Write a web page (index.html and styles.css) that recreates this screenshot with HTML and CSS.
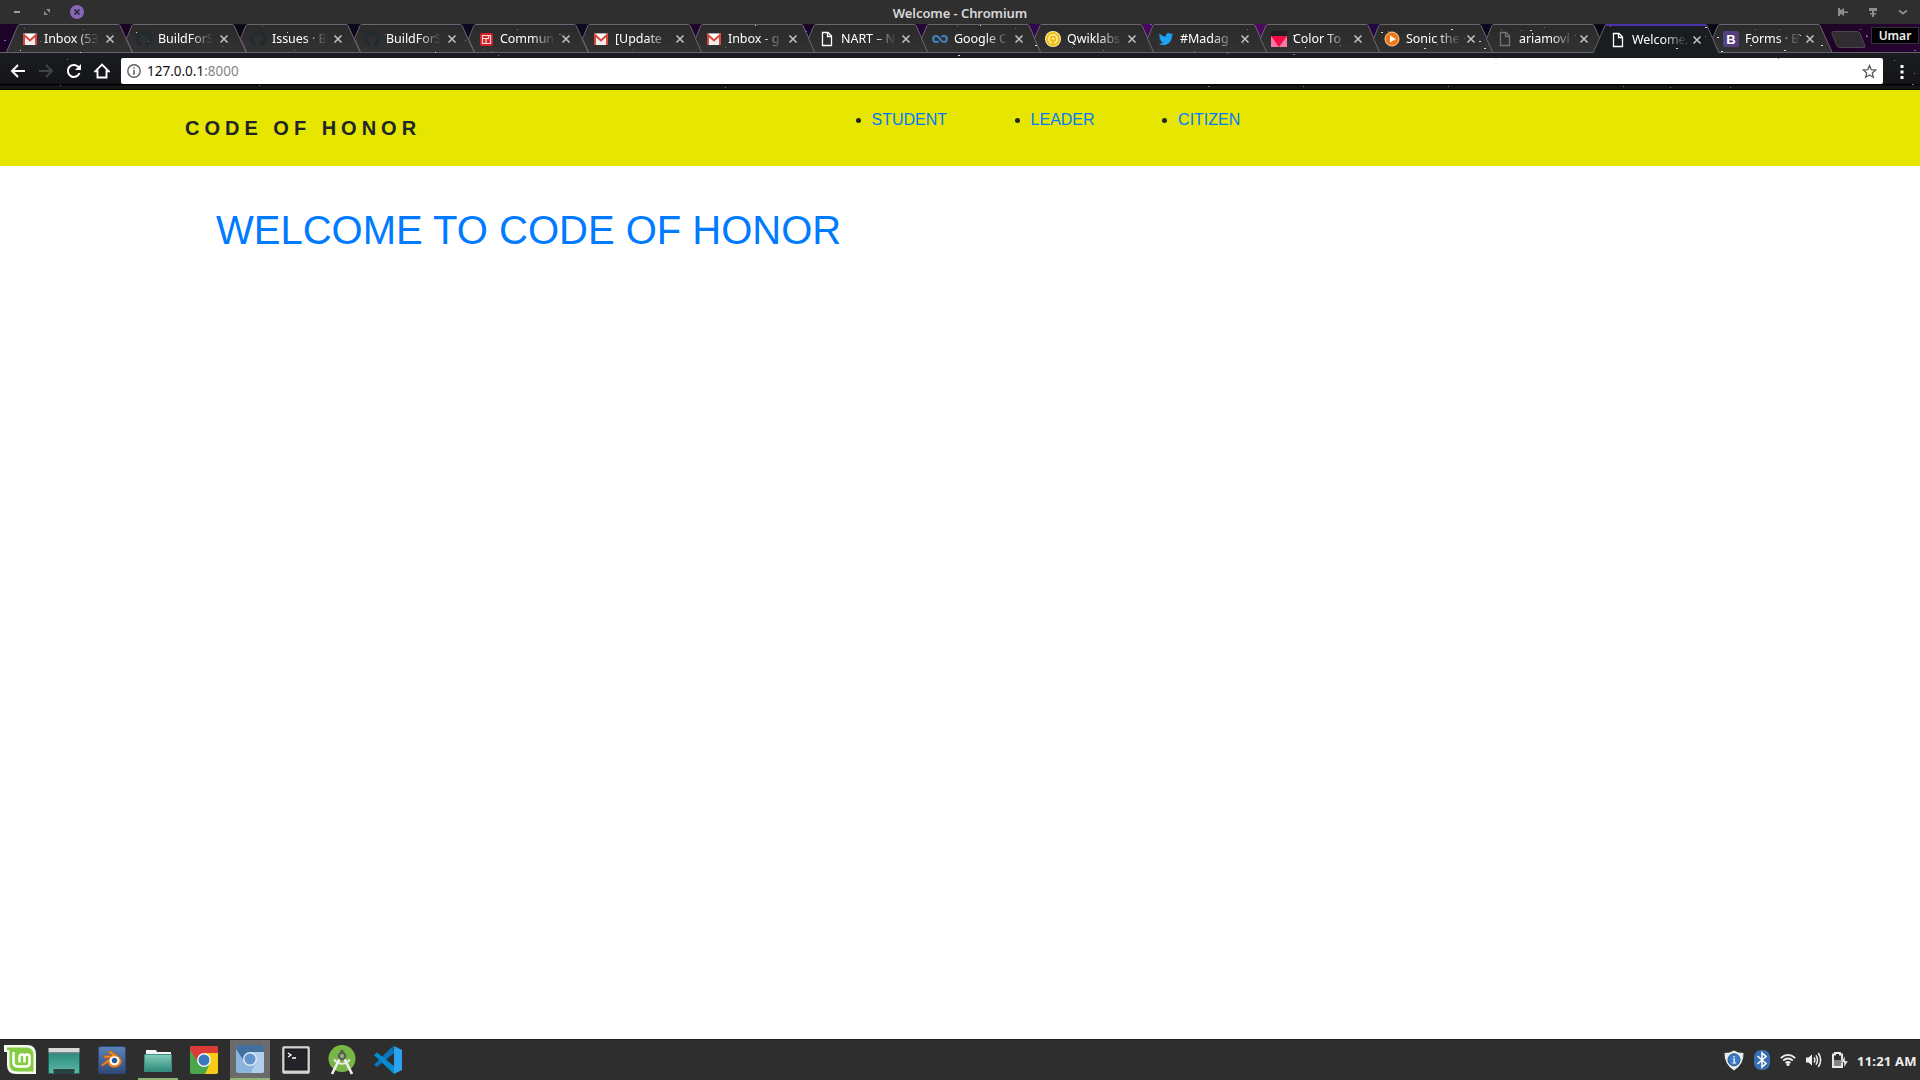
FILE: index.html
```html
<!DOCTYPE html>
<html lang="en">
<head>
<meta charset="utf-8">
<title>Welcome</title>
<link rel="stylesheet" href="styles.css">
</head>
<body>
<svg class="defs" aria-hidden="true">
  <defs>
    <linearGradient id="tabFill" x1="0" y1="0" x2="0" y2="1"><stop offset="0" stop-color="#2a2a2b"/><stop offset="1" stop-color="#323232"/></linearGradient>
    <linearGradient id="teal" x1="0" y1="0" x2="0" y2="1"><stop offset="0" stop-color="#2b8a7d"/><stop offset="1" stop-color="#5bb8a6"/></linearGradient>
    <linearGradient id="folderFill" x1="0" y1="0" x2="0" y2="1"><stop offset="0" stop-color="#86cdbb"/><stop offset="1" stop-color="#2c8a7b"/></linearGradient>
    <linearGradient id="blueFill" x1="0" y1="0" x2="0" y2="1"><stop offset="0" stop-color="#5d84b9"/><stop offset="1" stop-color="#2d4a78"/></linearGradient>
    <clipPath id="tile"><rect width="28" height="28" rx="2"/></clipPath>
    <symbol id="tabFirst" viewBox="0 0 127 29"><path d="M0.5 28L12 1.500Q12.500 .5 14 .5H112Q113.500 .5 114 1.500L126 28" fill="url(#tabFill)" stroke="#6c656f"/></symbol>
    <symbol id="tab" viewBox="0 0 127 29"><path d="M12.500 28L6.500 14.700 12 1.500Q12.500 .5 14 .5H112Q113.500 .5 114 1.500L126 28" fill="url(#tabFill)" stroke="#6c656f"/></symbol>
    <symbol id="tabActive" viewBox="0 0 127 29"><path d="M0 29L12 1.500Q12.500 1 14 1H112Q113.500 1 114 1.500L126 29" fill="#191d22" stroke="#66626b"/><path d="M13 1H113" stroke="#4c35a8" stroke-width="2"/></symbol>
    <symbol id="close" viewBox="0 0 10 10"><path d="M1.500 1.500L8.500 8.500M8.500 1.500L1.500 8.500" stroke="#c4c4c4" stroke-width="1.500"/></symbol>
    <symbol id="gmail" viewBox="0 0 16 16"><path d="M1 2.500H15V14H1Z" fill="#efefef"/><path d="M2 14V4L8 9.500 14 4V14" fill="none" stroke="#d9463c" stroke-width="2"/><path d="M3 2.800L8 7.200 13 2.800Z" fill="#fff"/></symbol>
    <symbol id="github" viewBox="0 0 16 16"><path fill="#202a31" d="M8 0C3.580 0 0 3.580 0 8c0 3.540 2.290 6.530 5.470 7.590.4.070.550-.170.550-.380v-1.490c-2.010.370-2.530-.490-2.690-.940-.090-.230-.480-.940-.820-1.130-.280-.150-.680-.520-.010-.530.630-.010 1.080.580 1.230.820.720 1.210 1.870.870 2.330.660.070-.520.280-.870.510-1.070-1.780-.2-3.640-.890-3.640-3.950 0-.870.310-1.590.820-2.150-.080-.2-.360-1.020.080-2.120 0 0 .670-.210 2.200.820a7.600 7.600 0 014 0c1.530-1.040 2.200-.820 2.200-.820.440 1.100.160 1.920.080 2.120.510.560.820 1.270.820 2.150 0 3.070-1.870 3.750-3.650 3.950.290.250.540.730.540 1.480v2.200c0 .210.150.460.550.380A8 8 0 0016 8c0-4.420-3.580-8-8-8z"/></symbol>
    <symbol id="page" viewBox="0 0 16 16"><path d="M3.500 1.500H9L12.500 5V14.500H3.500ZM8.500 1.500V5.500H12.500" fill="none" stroke="currentColor" stroke-width="1.300"/></symbol>
  </defs>
</svg>

<header class="titlebar">
  <div class="window-buttons">
    <svg width="14" height="14"><path d="M4 7H10" stroke="#a0a0a0" stroke-width="2"/></svg>
    <svg width="14" height="14"><path d="M6 4H10V8ZM4 6V10H8Z" fill="#8d8d8d"/></svg>
    <svg width="14" height="14"><circle cx="7" cy="7" r="7" fill="#8667b6"/><path d="M4.500 4.500L9.500 9.500M9.500 4.500L4.500 9.500" stroke="#2b2536" stroke-width="1.700"/></svg>
  </div>
  <span class="window-title">Welcome - Chromium</span>
  <div class="window-tools">
    <svg width="12" height="12"><path d="M1 2H3V3.500L4 4 7 2V5.500H11V7H7V10L4 8 3 8.500V10H1Z" fill="#8d8d8d"/></svg>
    <svg width="12" height="12"><path d="M2 2H10V5H2ZM5 5H7V7H9V8.500H7V11H5V8.500H3V7H5Z" fill="#8d8d8d"/></svg>
    <svg width="12" height="12"><path d="M2 4.500L6 7.500 10 4.500" fill="none" stroke="#8d8d8d" stroke-width="2"/></svg>
  </div>
</header>

<div class="chrome">
  <nav class="tabs">
    <div class="tab wide"><svg class="shape"><use href="#tabFirst"/></svg><svg class="fav"><use href="#gmail"/></svg><span class="label">Inbox (53</span><svg class="x"><use href="#close"/></svg></div>
    <div class="tab wide"><svg class="shape"><use href="#tab"/></svg><svg class="fav"><use href="#github"/></svg><span class="label">BuildForS</span><svg class="x"><use href="#close"/></svg></div>
    <div class="tab wide"><svg class="shape"><use href="#tab"/></svg><svg class="fav"><use href="#github"/></svg><span class="label">Issues · B</span><svg class="x"><use href="#close"/></svg></div>
    <div class="tab wide"><svg class="shape"><use href="#tab"/></svg><svg class="fav"><use href="#github"/></svg><span class="label">BuildForS</span><svg class="x"><use href="#close"/></svg></div>
    <div class="tab wide"><svg class="shape"><use href="#tab"/></svg><svg class="fav" viewBox="0 0 16 16"><rect x="2" y="2" width="13" height="13" rx="2" fill="#d32228"/><path d="M4.500 4.500H12.500V12.500H4.500Z" fill="none" stroke="#f5d5d5" stroke-width="1.200"/><path d="M5 7.500H10M8 8V12M10.500 5V8" stroke="#f5d5d5" stroke-width="1.200"/></svg><span class="label">Commun</span><svg class="x"><use href="#close"/></svg></div>
    <div class="tab"><svg class="shape"><use href="#tab"/></svg><svg class="fav"><use href="#gmail"/></svg><span class="label">[Update</span><svg class="x"><use href="#close"/></svg></div>
    <div class="tab"><svg class="shape"><use href="#tab"/></svg><svg class="fav"><use href="#gmail"/></svg><span class="label">Inbox - g</span><svg class="x"><use href="#close"/></svg></div>
    <div class="tab"><svg class="shape"><use href="#tab"/></svg><svg class="fav light"><use href="#page"/></svg><span class="label">NART – N</span><svg class="x"><use href="#close"/></svg></div>
    <div class="tab"><svg class="shape"><use href="#tab"/></svg><svg class="fav" viewBox="0 0 16 16"><path d="M6.500 10Q6 11 4.200 11A3 3 0 014.200 5Q6 5 8 8T11.800 11A3 3 0 0011.800 5Q10 5 9.500 6" fill="none" stroke="#3f82bd" stroke-width="2.200"/></svg><span class="label">Google C</span><svg class="x"><use href="#close"/></svg></div>
    <div class="tab"><svg class="shape"><use href="#tab"/></svg><svg class="fav" viewBox="0 0 16 16"><circle cx="8" cy="8" r="8" fill="#fff2b0"/><circle cx="8" cy="8" r="6" fill="none" stroke="#edbd13" stroke-width="2.200"/><circle cx="8" cy="8" r="2.500" fill="none" stroke="#edbd13" stroke-width="1.800"/><path d="M8 8V15" stroke="#edbd13" stroke-width="1.800"/></svg><span class="label">Qwiklabs</span><svg class="x"><use href="#close"/></svg></div>
    <div class="tab"><svg class="shape"><use href="#tab"/></svg><svg class="fav" viewBox="-1 -1 26 26"><path fill="#1da1f2" d="M23.950 4.570a10 10 0 01-2.820.770 4.960 4.960 0 002.160-2.720c-.950.550-2 .950-3.130 1.180a4.920 4.920 0 00-8.380 4.480C7.690 8.100 4.070 6.130 1.640 3.160a4.820 4.820 0 00-.670 2.480c0 1.710.870 3.210 2.190 4.100a4.900 4.900 0 01-2.230-.620v.060a4.920 4.920 0 003.950 4.830 5 5 0 01-2.210.080 4.940 4.940 0 004.600 3.420A9.870 9.870 0 010 19.540a14 14 0 007.550 2.210c9.050 0 14-7.500 14-13.980 0-.210 0-.420-.020-.630a9.900 9.900 0 002.420-2.570z"/></svg><span class="label">#Madag</span><svg class="x"><use href="#close"/></svg></div>
    <div class="tab"><svg class="shape"><use href="#tab"/></svg><svg class="fav" viewBox="0 0 16 16"><path d="M0 0H16V16H0Z" fill="#202020"/><path d="M0 5H16V16H0Z" fill="#ff78a5"/><path d="M0 5H16L8 16Z" fill="#f50b45"/></svg><span class="label">Color To</span><svg class="x"><use href="#close"/></svg></div>
    <div class="tab"><svg class="shape"><use href="#tab"/></svg><svg class="fav" viewBox="0 0 16 16"><circle cx="8" cy="8" r="7" fill="#f17816" stroke="#ffd0a0"/><path d="M6 4.500L12 8 6 11.500Z" fill="#fff"/></svg><span class="label">Sonic the</span><svg class="x"><use href="#close"/></svg></div>
    <div class="tab"><svg class="shape"><use href="#tab"/></svg><svg class="fav dim"><use href="#page"/></svg><span class="label">ariamovi</span><svg class="x"><use href="#close"/></svg></div>
    <div class="tab active"><svg class="shape"><use href="#tabActive"/></svg><svg class="fav light"><use href="#page"/></svg><span class="label">Welcome</span><svg class="x"><use href="#close"/></svg></div>
    <div class="tab"><svg class="shape"><use href="#tab"/></svg><svg class="fav" viewBox="0 0 16 16"><rect width="16" height="16" rx="2" fill="#563d7c"/><text x="3.300" y="12.700" class="bs">B</text></svg><span class="label">Forms · B</span><svg class="x"><use href="#close"/></svg></div>
    <svg class="new-tab" width="36" height="19"><path d="M3 .5H26Q28 .5 29 2L34 15Q34.500 16.500 33 16.500H9Q7 16.500 6 15L1 3Q0 .5 3 .5Z" fill="#2f2d31" stroke="#4b474d"/></svg>
    <span class="profile">Umar</span>
  </nav>
  <div class="toolbar">
    <svg class="nav-icon" viewBox="0 0 16 16"><path d="M15 8H2M8 2L2 8 8 14" fill="none" stroke="#fff" stroke-width="2"/></svg>
    <svg class="nav-icon" viewBox="0 0 16 16"><path d="M1 8H14M8 2L14 8 8 14" fill="none" stroke="#424345" stroke-width="2"/></svg>
    <svg class="nav-icon" viewBox="0 0 16 16"><path d="M13.500 10A6 6 0 1112 3.600L13.500 5.500" fill="none" stroke="#fff" stroke-width="2"/><path d="M15 1V7H9Z" fill="#fff"/></svg>
    <svg class="nav-icon" viewBox="0 0 16 16"><path d="M8 1.700L1.500 8.200H3.500V14.500H12.500V8.200H14.500Z" fill="none" stroke="#fff" stroke-width="1.900"/></svg>
    <div class="omnibox">
      <svg width="14" height="14"><circle cx="7" cy="7" r="6.200" fill="none" stroke="#5c5c5c" stroke-width="1.400"/><path d="M7 3.200V4.800M7 6V10.800" stroke="#5c5c5c" stroke-width="1.600"/></svg>
      <span class="url">127.0.0.1<span class="port">:8000</span></span>
      <svg class="star" width="15" height="15" viewBox="0 0 15 15"><path d="M7.500 1.500L9.200 5.600 13.700 6 10.300 8.900 11.300 13.200 7.500 10.900 3.700 13.200 4.700 8.900 1.300 6 5.800 5.600Z" fill="none" stroke="#5b5b5b" stroke-width="1.300"/></svg>
    </div>
    <svg class="menu" width="4" height="14"><path d="M.5 0H3.500V3H.5ZM.5 5.500H3.500V8.500H.5ZM.5 11H3.500V14H.5Z" fill="#fff"/></svg>
  </div>
  <svg class="stars" width="1920" height="66" viewBox="0 24 1920 66">
    <path stroke="#d8d8e0" d="M20 50.500h1M80 52.500h1M136 32.500h1M287 32.500h1M435 52.500h1M806 31.500h1M755 25.500h1M980 25.500h1M1035 45.500h2M1293 35.500h2M1305 47.500h1M1381 32.500h2M1424 48.500h2M1451 29.500h2M1479 41.500h2M1530 30.500h2M1484 48.500h2M1495 58.500h2M1676 48.500h2M1705 27.500h2M1717 37.500h2M1721 51.500h2M1750 45.500h2M1784 50.500h2M1800 35.500h1M1821 45.500h2M958 55.500h2"/>
    <path stroke="#777580" d="M24 28.500h1M40 41.500h1M67 59.500h1M83 29.500h1M148 41.500h1M222 46.500h1M262 26.500h1M294 50.500h1M385 34.500h1M465 40.500h1M484 49.500h1M491 51.500h1M498 55.500h1M517 29.500h1M559 34.500h2M633 49.500h1M725 47.500h1M957 26.500h1M1015 28.500h1M1072 47.500h1M1103 50.500h1M1194 51.500h1M1227 53.500h1M1247 29.500h1M1301 39.500h1M1340 45.500h1M1388 31.500h1M1437 44.500h1M1464 38.500h1M1501 29.500h1M1521 30.500h1M1544 27.500h1M1568 34.500h1M1575 35.500h1M1640 41.500h1M1686 43.500h1M1705 36.500h1M1724 42.500h1M1755 29.500h1M1780 29.500h1M1795 42.500h1M1860 29.500h1M1866 35.500h1M60 85.500h1M259 85.500h1M725 87.500h1M1208 86.500h2M1448 86.500h1M1623 86.500h1M1670 87.500h1M1730 87.500h1M1894 60.500h1"/>
    <path stroke="#9b6c78" d="M1293 54.500h2M1209 86.500h1M1303 86.500h1M1610 26.500h1M1798 34.500h2M1778 58.500h1M1914 73.500h1M1912 84.500h2M1243 43.500h1"/>
    <path stroke="#7563dd" d="M4 40.500h2M24 28.500h1M564 24.500h1M805 31.500h2M1150 24.500h2M1866 36.500h2M1914 50.500h2"/>
  </svg>
</div>

<main class="page">
  <header class="site-header">
    <div class="brand">CODE OF HONOR</div>
    <ul class="links">
      <li><a href="#">STUDENT</a></li>
      <li><a href="#">LEADER</a></li>
      <li><a href="#">CITIZEN</a></li>
    </ul>
  </header>
  <h1 class="welcome">WELCOME TO CODE OF HONOR</h1>
</main>

<footer class="panel">
  <div class="launchers">
    <div class="app mint"><svg width="32" height="30" viewBox="0 0 32 30"><path d="M0 0H23Q32 0 32 9V29H12Q3 29 3 20V7H0Z" fill="#f4f8ef"/><path d="M3 2.500H22Q29.500 2.500 29.500 10V26.500H13Q5.500 26.500 5.500 19V5H3Z" fill="#86cc42"/><path d="M9.500 7V17Q9.500 21.500 14 21.500H22Q25.500 21.500 25.500 18V12Q25.500 9.500 23 9.500T20.500 12V17.500M20.500 12Q20.500 9.500 18 9.500T15.500 12V17.500" fill="none" stroke="#fff" stroke-width="2.500"/></svg></div>
    <div class="app desktop"><svg width="32" height="26" viewBox="0 0 32 26"><path d="M.5 4H31.500V25.500H.5Z" fill="url(#teal)" stroke="#1f6259"/><path d="M.5 0H31.500V4.500H.5Z" fill="#d7d7d7"/><path d="M1 5H31" stroke="#777"/><path d="M5 26V20.500H27V26" fill="#24443f" stroke="#68aaa0"/></svg></div>
    <div class="app"><svg width="28" height="28"><rect x=".5" y=".5" width="27" height="27" rx="2" fill="url(#blueFill)" stroke="#2d4878"/><path d="M3 19L12 12H6V9.500H14L10 6 12 4.500 21 10.500Q25 14 23 18 20 22 15 21.500 10 20.500 10 16.500L5 20Z" fill="#ee8727" stroke="#b65a17" stroke-width=".7"/><ellipse cx="16.500" cy="14.800" rx="5" ry="4.500" fill="#fff"/><circle cx="16.500" cy="14.500" r="2.700" fill="#235c9e"/></svg></div>
    <div class="app open"><svg width="28" height="28"><path d="M2 10V5H12L13 7H27V12H2Z" fill="#f4f4f4"/><path d="M.5 9.500H27.500V26.500H.5Z" fill="url(#folderFill)" stroke="#3c8e7e"/></svg></div>
    <div class="app"><svg width="28" height="28"><g clip-path="url(#tile)"><path d="M0 0H28V28H0Z" fill="#49a74b"/><path d="M14 7H28V28H15L20 17Z" fill="#f8cb16"/><path d="M0 0H28V7H14L8 16 0 4Z" fill="#dc3a37"/><circle cx="14" cy="14" r="7" fill="#f2f4f3"/><circle cx="14" cy="14" r="5.500" fill="#3979bc"/></g></svg></div>
    <div class="app open current"><svg width="28" height="28"><g clip-path="url(#tile)"><path d="M0 0H28V28H0Z" fill="#8cb5dd"/><path d="M14 7H28V28H15L20 17Z" fill="#b1cfeb"/><path d="M0 0H28V7H14L8 16 0 4Z" fill="#426f9e"/><circle cx="14" cy="14" r="7" fill="#dce9f5"/><circle cx="14" cy="14" r="5.500" fill="#6194cb"/></g></svg></div>
    <div class="app"><svg width="28" height="28"><rect x=".5" y=".5" width="27" height="27" rx="1.500" fill="#d5d5d2" stroke="#b2b2b2"/><rect x="3" y="3" width="22" height="21" fill="#24232a" stroke="#111"/><path d="M6 7L9 9 6 11M10 12H14" fill="none" stroke="#fff" stroke-width="1.300"/></svg></div>
    <div class="app"><svg width="28" height="30" viewBox="0 0 28 30"><circle cx="14" cy="13.500" r="13.500" fill="#78b745"/><path d="M6 14.500Q14 23 22 14.500" fill="none" stroke="#e6e8e6" stroke-width="2"/><path d="M12.500 12L4 29M15.500 12L24 29" stroke="#eee" stroke-width="2.700"/><path d="M12.500 5H15.500V9H12.500Z" fill="#555"/><circle cx="14" cy="11" r="3.200" fill="#92b973" stroke="#555e59" stroke-width="2.200"/></svg></div>
    <div class="app"><svg width="28" height="28"><path d="M20 7L3 21 0 18.500 19 0Z" fill="#0975bb"/><path d="M0 9L3 6.500 20 20V28Z" fill="#078cd4"/><path d="M20 0L28 4V24L20 28Z" fill="#29a4ed"/></svg></div>
  </div>
  <div class="tray">
    <svg width="20" height="21" viewBox="0 0 20 21"><path d="M10 .5Q14 3 19.500 3 20 14 10 20.500 0 14 .5 3 6 3 10 .5Z" fill="#e9ebec"/><circle cx="10" cy="9.800" r="6" fill="#3c7cc5" stroke="#26568e"/><path d="M10 6V7.500M9 9H10.200V13M8.500 13H12" fill="none" stroke="#fff" stroke-width="1.200"/></svg>
    <svg width="16" height="20" viewBox="0 0 16 20"><rect width="16" height="20" rx="7" fill="#3970b2"/><path d="M3.500 6L12 13.500 8 17V3L12 6.500 3.500 14" fill="none" stroke="#fff" stroke-width="1.500"/></svg>
    <svg width="16" height="16" viewBox="0 0 16 16"><path d="M.8 6Q8-.2 15.200 6M3.200 8.500Q8 4.500 12.800 8.500M5.500 11Q8 9 10.500 11" fill="none" stroke="#eee" stroke-width="1.700"/><circle cx="8" cy="12.500" r="1.600" fill="#eee"/></svg>
    <svg width="16" height="16" viewBox="0 0 16 16"><path d="M0 5.500H2.500L6 2.500V13.500L2.500 10.500H0Z" fill="#eee"/><path d="M8 5.500Q9.800 8 8 10.500M10 3.300Q13 8 10 12.700M12.300 1Q17 8 12.300 15" fill="none" stroke="#eee" stroke-width="1.500"/></svg>
    <svg width="16" height="16" viewBox="0 0 16 16"><path d="M1 15V2.500H3V1H8V2.500H10V15Z" fill="none" stroke="#eee" stroke-width="1.900"/><path d="M2 8H9V14H2Z" fill="#858585"/><path d="M12.800 4L9 10.500H12V15.500L16 9H13Z" fill="#eee" stroke="#303030" stroke-width=".4"/></svg>
    <span class="clock">11:21 AM</span>
  </div>
</footer>
</body>
</html>
```
FILE: styles.css
```css
* { box-sizing: border-box; }

body {
  margin: 0;
  height: 1080px;
  display: flex;
  flex-direction: column;
  overflow: hidden;
  background: #fff;
  font-family: "Noto Sans", "Open Sans", sans-serif;
}

svg { display: block; flex: none; }
.defs { position: absolute; width: 0; height: 0; }

/* Window title bar */
.titlebar {
  height: 24px;
  flex: none;
  display: grid;
  grid-template-columns: 1fr auto 1fr;
  align-items: center;
  background: #2f2f2f;
}
.window-buttons { display: flex; gap: 16px; padding-left: 10px; }
.window-title {
  padding-top: 2px;
  font-size: 13px;
  line-height: 22px;
  font-weight: 600;
  letter-spacing: -0.08px;
  color: #d8d8d8;
}
.window-tools { display: flex; gap: 18px; justify-content: flex-end; padding-right: 11px; }

/* Tabs and toolbar */
.chrome {
  position: relative;
  height: 66px;
  flex: none;
  background: #141619;
}
.tabs {
  height: 29px;
  display: flex;
  padding-left: 6px;
  border-bottom: 1px solid #66636a;
  background: linear-gradient(90deg, #1c0328 0%, #190322 8%, #0c0717 13%, #0d0820 30%, #24042e 38%, #100420 45%, #310543 50%, #2e0750 57%, #4e0862 61%, #4b0b60 67%, #240744 71%, #0a0619 78%, #070612 90%, #200329 96%, #260432 100%);
}
.tab {
  position: relative;
  width: 113px;
  height: 28px;
  flex: none;
  display: flex;
  align-items: center;
  padding-left: 17px;
  color: #fff;
}
.tab.wide { width: 114px; padding-left: 16px; }
.tab.active { z-index: 2; height: 29px; }
.shape { position: absolute; left: 0; top: 0; width: 127px; height: 29px; }
.fav { position: relative; width: 16px; height: 16px; margin-top: 2px; }
.fav.light { color: #fff; }
.fav.dim { color: #757575; }
.bs { font: bold 13px "Liberation Sans", sans-serif; fill: #fff; }
.label {
  position: relative;
  width: 55px;
  margin: 2px 0 0 6px;
  white-space: nowrap;
  font-size: 12.5px;
  line-height: 20px;
  letter-spacing: -0.05px;
  mask-image: linear-gradient(90deg, #000 58%, transparent 100%);
}
.x { position: relative; width: 10px; height: 10px; margin: 2px 0 0 5px; }
.wide .x { margin-left: 6px; }
.new-tab { margin: 7px 0 0 12px; }
.profile {
  width: 48px;
  height: 17px;
  margin: 3px 1px 0 auto;
  border: 1px solid #343037;
  background: #000;
  color: #eee;
  font-size: 12px;
  font-weight: 600;
  line-height: 15px;
  text-align: center;
}
.toolbar {
  height: 37px;
  display: flex;
  align-items: flex-start;
  padding: 5px 16px 0 10px;
  background: linear-gradient(#191c20, #141518 31px, #000 31px, #000 32px, #18191b 33px, #111214 36px, #000 36px);
}
.nav-icon { width: 16px; height: 16px; margin: 5px 12px 0 0; }
.omnibox {
  flex: 1;
  height: 26px;
  margin-left: -1px;
  display: flex;
  align-items: center;
  gap: 6px;
  padding: 0 6px;
  border-radius: 2px;
  background: #fff;
}
.url { font-size: 13.5px; line-height: 24px; color: #111; }
.port { color: #858585; }
.star { margin-left: auto; }
.menu { margin: 7px 0 0 17px; }
.stars { position: absolute; left: 0; top: 0; z-index: 3; pointer-events: none; }

/* Page */
.page {
  flex: 1;
  font-family: "Liberation Sans", Arial, sans-serif;
  color: #212529;
}
.site-header {
  height: 76px;
  display: flex;
  align-items: flex-start;
  background: #e6e600;
}
.brand {
  width: 647px;
  padding: 23px 0 0 185px;
  white-space: nowrap;
  font-size: 20px;
  font-weight: 700;
  line-height: 30px;
  letter-spacing: 5px;
}
.links {
  display: flex;
  gap: 83.5px;
  margin: 0;
  padding: 18px 0 0 224.5px;
  font-size: 16px;
  line-height: 24px;
}
.links a { color: #007bff; text-decoration: none; }
.welcome {
  margin: 0;
  padding: 40px 0 0 216px;
  font-size: 40px;
  font-weight: 400;
  line-height: 48px;
  color: #007bff;
}

/* Desktop panel */
.panel {
  height: 41px;
  flex: none;
  display: flex;
  justify-content: space-between;
  border-top: 1px solid #1f1f1f;
  background: #2e2e2e;
}
.launchers { display: flex; gap: 6px; }
.app { width: 40px; display: flex; align-items: center; justify-content: center; }
.app.mint { margin-right: -2px; }
.app.desktop { margin-right: 2px; padding-top: 2px; }
.app.open { border-bottom: 2px solid #92b372; }
.app.current { background: #6b6b6b; }
.tray { display: flex; align-items: center; gap: 10px; padding-right: 3px; }
.clock {
  width: 60px;
  margin-left: -1px;
  padding-top: 1px;
  white-space: nowrap;
  color: #eee;
  font-size: 13px;
  font-weight: 700;
  letter-spacing: 0.2px;
}
```
